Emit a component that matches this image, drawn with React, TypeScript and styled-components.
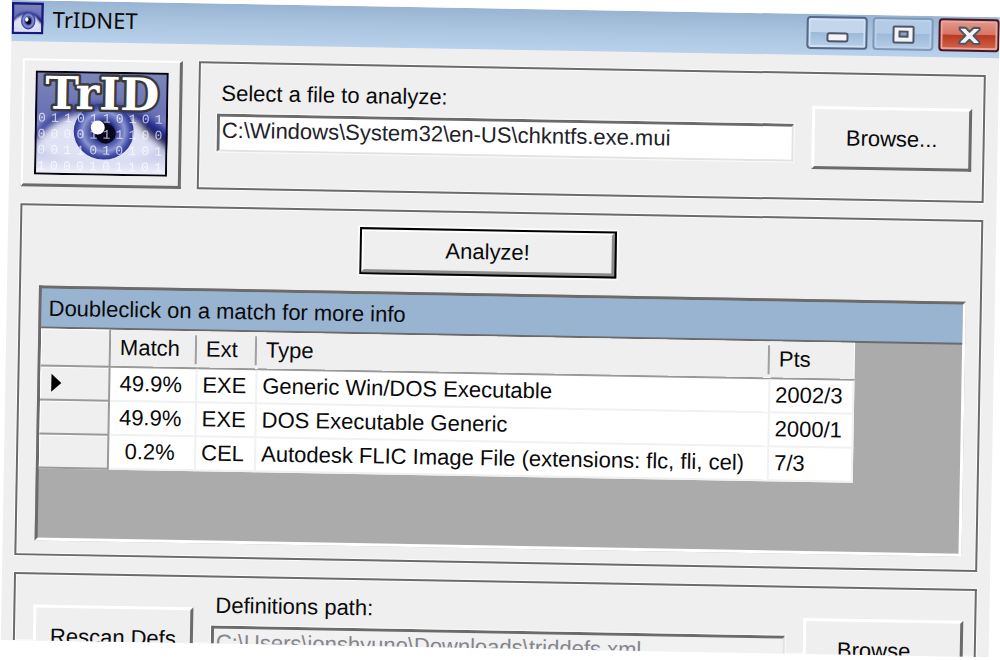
import React from "react";
import styled, { createGlobalStyle } from "styled-components";

const ink = "#0a0a0a";
const face = "#efefef";
const shade = "#6b6b6b";
const font = `"Liberation Sans", Arial, sans-serif`;

const Global = createGlobalStyle`
  *, *::before, *::after { box-sizing: border-box; }
  html { overflow: hidden; }
  body { margin: 0; min-height: 100vh; background: #fff; }
`;

const Window = styled.main`
  margin-left: 12px;
  overflow: hidden;
  background: ${face};
  color: ${ink};
  font: 22px/28px ${font};
  transform: rotate(1deg);
  transform-origin: 0 0;
`;

const TitleBar = styled.header`
  display: flex;
  align-items: flex-start;
  height: 41px;
  padding-top: 2px;
  background: linear-gradient(#98b4d2, #a9c3df 45%, #b9d1ea);
`;

const TitleText = styled.h1`
  flex: 1;
  margin: 0 0 0 9px;
  font: 22px/32px "Noto Sans", "Open Sans", sans-serif;
`;

const Captions = styled.div`
  display: flex;
  gap: 5px;
`;

const CaptionButton = styled.button<{ $kind: "min" | "max" | "close" }>`
  width: 61px;
  height: 33px;
  padding: 0;
  display: grid;
  place-items: center;
  border: 2px solid ${(p) => ({ min: "#54698a", max: "#8099bb", close: "#4a1523" })[p.$kind]};
  border-radius: 4px;
  box-shadow: inset 0 0 0 2px ${(p) => ({ min: "#d3e2f3", max: "#bcd2ea", close: "#e9a79c" })[p.$kind]};
  background: ${(p) =>
    ({
      min: "linear-gradient(#c3d6ec 48%, #9db9d8 50%, #b8d0ea)",
      max: "linear-gradient(#b3cbe6 48%, #9ebad9 50%, #b3cce7)",
      close: "linear-gradient(#e3998b, #d77565 48%, #b8391f 50%, #d4664c)",
    })[p.$kind]};
`;

const Body = styled.div`
  display: flex;
  flex-direction: column;
  gap: 17px;
  padding: 17px 13px 0 12px;
`;

const TopRow = styled.div`
  display: flex;
  gap: 16px;
  height: 128px;
`;

const LogoFrame = styled.div`
  display: grid;
  place-items: center;
  width: 160px;
  border: 2px solid;
  border-width: 2px 3px 3px 2px;
  border-color: #fff ${shade} ${shade} #fff;
`;

const Panel = styled.section`
  border: 2px solid ${shade};
  box-shadow: 0 0 0 1px #fcfcfc, inset 0 0 0 1px #fcfcfc;
`;

const FilePanel = styled(Panel)`
  flex: 1;
  display: flex;
  align-items: flex-start;
  padding: 16px 11px 0 17px;
`;

const ResultPanel = styled(Panel)`
  height: 352px;
  display: flex;
  flex-direction: column;
  align-items: center;
  padding: 16px 14px 0 18px;
`;

const DefsPanel = styled(Panel)`
  display: flex;
  align-items: flex-start;
  height: 68px;
  overflow: hidden;
  border-bottom: 0;
  padding: 14px 11px 0 18px;
`;

const Field = styled.label`
  flex: 1;
  display: flex;
  flex-direction: column;
  gap: 6px;
  margin-right: 18px;
  min-width: 0;
  button + & { margin-left: 18px; }
`;

const FieldName = styled.span`
  padding-left: 4px;
`;

const PathInput = styled.input`
  width: 100%;
  height: 38px;
  padding: 0 2px 6px;
  border: 3px solid;
  border-color: ${shade} #e2e2e2 #e2e2e2 ${shade};
  border-width: 3px 2px 2px 3px;
  outline: 1px solid #fafafa;
  background: #fff;
  color: #22222a;
  font: 22px/28px ${font};
  &:read-only { background: #f1f1f1; color: #85858d; }
`;

const PushButton = styled.button`
  flex: none;
  width: 160px;
  height: 63px;
  margin-top: 16px;
  padding: 0;
  border: 3px solid;
  border-color: #fff ${shade} ${shade} #fff;
  background: ${face};
  color: ${ink};
  font: 22px/28px ${font};
`;

const AnalyzeButton = styled(PushButton)`
  width: 257px;
  height: 47px;
  margin: 0 30px 17px 0;
  border-color: #fff #8b8b8b #8b8b8b #fff;
  border-width: 4px 5px 5px 4px;
  outline: 2px solid #000;
  outline-offset: -2px;
  box-shadow: 0 0 0 2px #fbfbfb;
`;

const DataGrid = styled.div`
  align-self: stretch;
  height: 255px;
  border: 3px solid;
  border-color: ${shade} #fff #fff ${shade};
  background: #ababab;
`;

const Caption = styled.div`
  height: 40px;
  padding-left: 7px;
  border-bottom: 2px solid ${shade};
  background: #99b4d1;
  line-height: 40px;
`;

const Table = styled.table`
  table-layout: fixed;
  width: 814px;
  border-collapse: collapse;
  background: #fff;
`;

const Col = styled.col<{ $w?: number }>`
  width: ${(p) => (p.$w ? `${p.$w}px` : "auto")};
`;

const HeadCell = styled.th`
  position: relative;
  height: 37px;
  padding: 0 0 0 9px;
  border-bottom: 2px solid #999;
  background: ${face};
  font-weight: 400;
  text-align: left;
  &:not(:last-child)::after {
    content: "";
    position: absolute;
    right: 0;
    top: 4px;
    bottom: 3px;
    width: 2px;
    background: #a0a0a0;
  }
`;

const RowHead = styled.th`
  padding: 0 0 0 10px;
  border: 2px solid #9a9a9a;
  border-left: 0;
  background: ${face};
  box-shadow: inset 1px 1px #fff;
  text-align: left;
`;

const CornerCell = styled(RowHead)`
  border-top: 0;
`;

const Cell = styled.td<{ $center?: boolean }>`
  height: 34px;
  padding: ${(p) => (p.$center ? "0 4px 0 0" : "0 0 0 5px")};
  border: 2px solid #f1f1f1;
  border-width: 0 2px 2px 0;
  overflow: hidden;
  white-space: nowrap;
  text-align: ${(p) => (p.$center ? "center" : "left")};
`;

const rows = [
  ["49.9%", "EXE", "Generic Win/DOS Executable", "2002/3"],
  ["49.9%", "EXE", "DOS Executable Generic", "2000/1"],
  ["0.2%", "CEL", "Autodesk FLIC Image File (extensions: flc, fli, cel)", "7/3"],
];

const bits = ["0110110101", "0000111100", "0011010101", "1000101101"];

const Eye = ({ id }: { id: string }) => (
  <>
    <defs>
      <linearGradient id={`${id}-sky`} x1="0" y1="0" x2="0" y2="1">
        <stop offset="0" stopColor="#7d86bb" />
        <stop offset=".4" stopColor="#6a73b4" />
        <stop offset=".7" stopColor="#b4bae0" />
        <stop offset="1" stopColor="#f4f4fc" />
      </linearGradient>
      <radialGradient id={`${id}-iris`}>
        <stop offset="0" stopColor="#05051c" />
        <stop offset=".28" stopColor="#0b0b34" />
        <stop offset=".42" stopColor="#3a459c" />
        <stop offset=".7" stopColor="#8a95d2" />
        <stop offset=".88" stopColor="#4550a8" />
        <stop offset="1" stopColor="#2c3692" />
      </radialGradient>
      <filter id={`${id}-soft`}><feGaussianBlur stdDeviation="3" /></filter>
      <clipPath id={`${id}-edge`}><rect width="133" height="104" /></clipPath>
    </defs>
    <g clipPath={`url(#${id}-edge)`}>
      <rect width="133" height="104" fill={`url(#${id}-sky)`} />
      <g filter={`url(#${id}-soft)`}>
        <path d="M2 76C20 44 40 44 70 40C100 42 118 52 131 72C110 94 40 102 2 76Z" fill="#dfe2f4" />
        <path d="M-4 68C18 36 44 32 70 32C102 34 120 48 138 60L138 72C114 56 96 44 68 42C42 42 22 46 -4 76Z" fill="#27309a" />
        <path d="M98 44C112 50 124 58 136 66V78C122 72 108 62 98 44Z" fill="#1b2168" />
      </g>
      <ellipse cx="69" cy="60" rx="30" ry="28" fill={`url(#${id}-iris)`} />
      <circle cx="71" cy="62" r="10" fill="#07071f" />
      <circle cx="63" cy="56" r="7" fill="#fff" />
    </g>
  </>
);

const AppIcon = () => (
  <svg width="32" height="32" viewBox="0 0 133 133" aria-hidden="true">
    <g transform="scale(1 1.28)"><Eye id="icon" /></g>
    <rect x="5" y="5" width="123" height="123" fill="none" stroke="#151a80" strokeWidth="10" />
  </svg>
);

const Logo = () => (
  <svg width="133" height="104" viewBox="0 0 133 104" role="img" aria-label="TrID">
    <Eye id="logo" />
    <g fill="#fff" opacity=".7" fontFamily="Liberation Mono, monospace" fontSize="13">
      {bits.map((line, row) =>
        line.split("").map((bit, i) => (
          <text key={`${row}-${i}`} x={3 + i * 13} y={51 + row * 16}>{bit}</text>
        )),
      )}
    </g>
    <text
      x="67" y="38" textAnchor="middle" fontFamily="DejaVu Serif, serif" fontWeight="700"
      fontSize="45" fill="#fff" stroke="#3a3a3a" strokeWidth="5" paintOrder="stroke" strokeLinejoin="round"
    >
      TrID
    </text>
    <rect x="1" y="1" width="131" height="102" fill="none" stroke="#050510" strokeWidth="2" />
  </svg>
);

const glyph = { fill: "#f4f4f4", stroke: "#4d5568", strokeWidth: 2 };

export default function App() {
  return (
    <>
      <Global />
      <Window>
        <TitleBar>
          <AppIcon />
          <TitleText>TrIDNET</TitleText>
          <Captions>
            <CaptionButton $kind="min" aria-label="Minimize">
              <svg width="24" height="24"><rect x="2" y="12" width="20" height="8" rx="2" {...glyph} /></svg>
            </CaptionButton>
            <CaptionButton $kind="max" aria-label="Maximize">
              <svg width="24" height="24">
                <rect x="2" y="4" width="20" height="16" rx="1" {...glyph} />
                <rect x="8" y="9" width="8" height="5" fill="#8ba8cb" stroke="#4d5568" strokeWidth="2" />
              </svg>
            </CaptionButton>
            <CaptionButton $kind="close" aria-label="Close">
              <svg width="24" height="20" viewBox="0 0 24 20">
                <path
                  d="M2 2H8L12 6L16 2H22V4L16 10L22 16V18H16L12 14L8 18H2V16L8 10L2 4Z"
                  strokeLinejoin="round" {...glyph}
                />
              </svg>
            </CaptionButton>
          </Captions>
        </TitleBar>
        <Body>
          <TopRow>
            <LogoFrame><Logo /></LogoFrame>
            <FilePanel>
              <Field>
                <FieldName>Select a file to analyze:</FieldName>
                <PathInput defaultValue="C:\Windows\System32\en-US\chkntfs.exe.mui" />
              </Field>
              <PushButton>Browse...</PushButton>
            </FilePanel>
          </TopRow>
          <ResultPanel>
            <AnalyzeButton>Analyze!</AnalyzeButton>
            <DataGrid>
              <Caption>Doubleclick on a match for more info</Caption>
              <Table>
                <colgroup>
                  <Col $w={69} /><Col $w={87} /><Col $w={60} /><Col /><Col $w={84} />
                </colgroup>
                <thead>
                  <tr>
                    <CornerCell aria-label="Current row" />
                    <HeadCell>Match</HeadCell>
                    <HeadCell>Ext</HeadCell>
                    <HeadCell>Type</HeadCell>
                    <HeadCell>Pts</HeadCell>
                  </tr>
                </thead>
                <tbody>
                  {rows.map(([match, ext, type, pts], i) => (
                    <tr key={i}>
                      <RowHead scope="row">
                        {i === 0 && (
                          <svg width="12" height="20" display="block"><path d="M1 1L11 10L1 19Z" fill="#000" /></svg>
                        )}
                      </RowHead>
                      <Cell $center>{match}</Cell>
                      <Cell>{ext}</Cell>
                      <Cell>{type}</Cell>
                      <Cell>{pts}</Cell>
                    </tr>
                  ))}
                </tbody>
              </Table>
            </DataGrid>
          </ResultPanel>
          <DefsPanel>
            <PushButton>Rescan Defs</PushButton>
            <Field>
              <FieldName>Definitions path:</FieldName>
              <PathInput readOnly defaultValue="C:\Users\jonshyuno\Downloads\triddefs.xml" />
            </Field>
            <PushButton>Browse...</PushButton>
          </DefsPanel>
        </Body>
      </Window>
    </>
  );
}
